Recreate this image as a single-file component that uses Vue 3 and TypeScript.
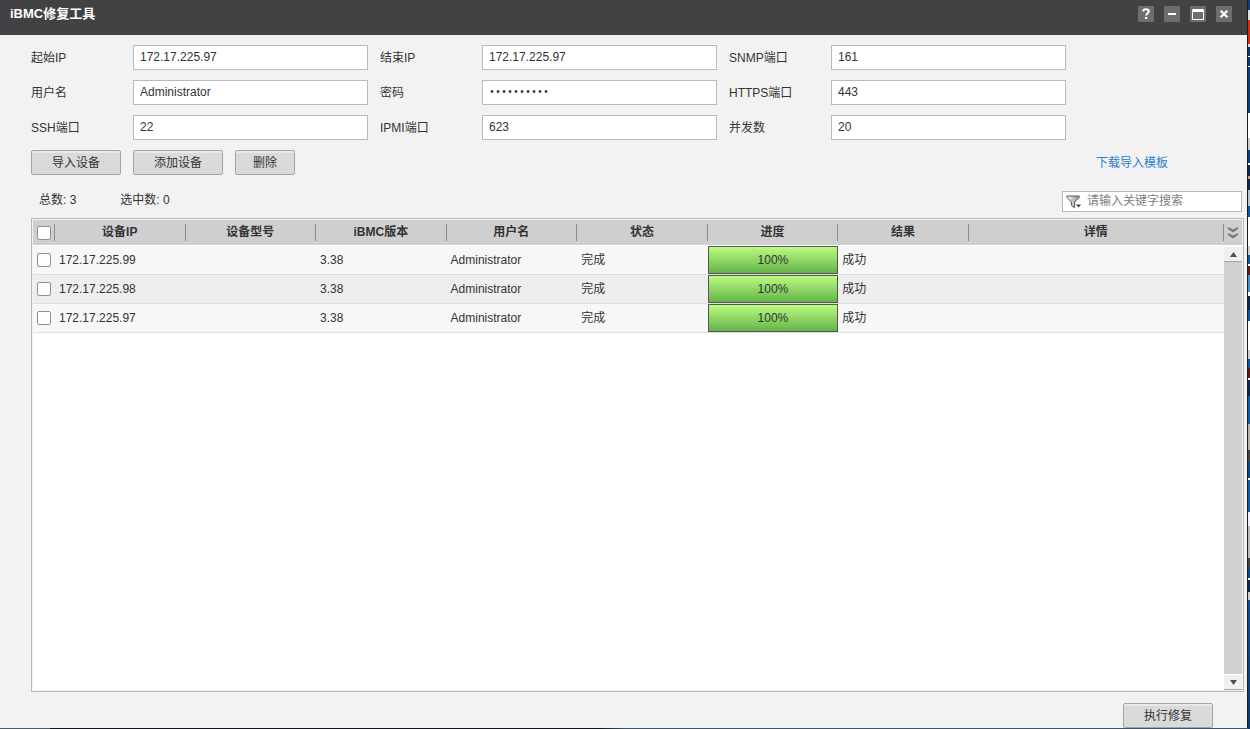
<script setup lang="ts">
import { computed, ref } from 'vue'

interface Field {
  id: string
  label: string
  value: string
  type: 'text' | 'password'
}

interface Device {
  ip: string
  model: string
  version: string
  user: string
  status: string
  progress: number
  result: string
  detail: string
  checked: boolean
}

const fields = ref<Field[]>([
  { id: 'start-ip', label: '起始IP', value: '172.17.225.97', type: 'text' },
  { id: 'end-ip', label: '结束IP', value: '172.17.225.97', type: 'text' },
  { id: 'snmp-port', label: 'SNMP端口', value: '161', type: 'text' },
  { id: 'user-name', label: '用户名', value: 'Administrator', type: 'text' },
  { id: 'password', label: '密码', value: '0000000000', type: 'password' },
  { id: 'https-port', label: 'HTTPS端口', value: '443', type: 'text' },
  { id: 'ssh-port', label: 'SSH端口', value: '22', type: 'text' },
  { id: 'ipmi-port', label: 'IPMI端口', value: '623', type: 'text' },
  { id: 'concurrency', label: '并发数', value: '20', type: 'text' },
])

const headers: string[] = ['设备IP', '设备型号', 'iBMC版本', '用户名', '状态', '进度', '结果']

const makeDevice = (ip: string): Device => ({
  ip,
  model: '',
  version: '3.38',
  user: 'Administrator',
  status: '完成',
  progress: 100,
  result: '成功',
  detail: '',
  checked: false,
})

const devices = ref<Device[]>(['172.17.225.99', '172.17.225.98', '172.17.225.97'].map(makeDevice))
const keyword = ref('')

const selected = computed(() => devices.value.filter((d) => d.checked).length)
const visible = computed(() => devices.value.filter((d) => d.ip.includes(keyword.value)))
const allChecked = computed({
  get: () => devices.value.length > 0 && selected.value === devices.value.length,
  set: (on: boolean) => devices.value.forEach((d) => (d.checked = on)),
})

function removeSelected(): void {
  devices.value = devices.value.filter((d) => !d.checked)
}
</script>

<template>
  <div class="desktop">
    <div class="window">
      <header class="titlebar">
        <h1>iBMC修复工具</h1>
        <div class="controls">
          <button type="button" aria-label="帮助">
            <svg viewBox="0 0 16 16"><path d="M5.2 5.6C5.2 3.9 6.4 3.2 8 3.2s2.8.9 2.8 2.3c0 1.8-2.6 1.9-2.6 4" fill="none" stroke="#fff" stroke-width="2" /><path d="M7 11h2.3v2H7z" fill="#fff" /></svg>
          </button>
          <button type="button" aria-label="最小化">
            <svg viewBox="0 0 16 16"><path d="M4 7h8v2H4z" fill="#fff" /></svg>
          </button>
          <button type="button" aria-label="最大化">
            <svg viewBox="0 0 16 16"><path d="M3 3h10l1 1v10H2V4zM3 6v7h10V6z" fill="#fff" fill-rule="evenodd" /></svg>
          </button>
          <button type="button" aria-label="关闭">
            <svg viewBox="0 0 16 16"><path d="M4.6 4.8l6.8 6.4M11.4 4.8l-6.8 6.4" stroke="#fff" stroke-width="2.2" /></svg>
          </button>
        </div>
      </header>

      <main class="content">
        <form class="fields" @submit.prevent>
          <template v-for="f in fields" :key="f.id">
            <label :for="f.id">{{ f.label }}</label>
            <input :id="f.id" v-model="f.value" :type="f.type" autocomplete="off" />
          </template>
        </form>

        <div class="actions">
          <button type="button" class="btn">导入设备</button>
          <button type="button" class="btn">添加设备</button>
          <button type="button" class="btn short" @click="removeSelected">删除</button>
          <a href="#template">下载导入模板</a>
        </div>

        <div class="summary">
          <span>总数: {{ devices.length }}</span>
          <span>选中数: {{ selected }}</span>
          <label class="search">
            <svg viewBox="0 0 16 14">
              <defs>
                <linearGradient id="funnel" x1="0" x2="1"><stop offset="0" stop-color="#fff" /><stop offset="1" stop-color="#888" /></linearGradient>
              </defs>
              <path d="M.8 1h12.4v1.4L8.6 7v5.8L5.4 10.4V7L.8 2.4z" fill="url(#funnel)" stroke="#555" />
              <path d="M9.8 9.5h5.4l-2.7 3z" fill="#444" />
            </svg>
            <input v-model="keyword" type="text" placeholder="请输入关键字搜索" aria-label="搜索" />
          </label>
        </div>

        <section class="grid">
          <div class="rows">
            <table>
              <colgroup>
                <col class="c-check" />
                <col v-for="h in headers" :key="h" class="c-data" />
                <col />
              </colgroup>
              <thead>
                <tr>
                  <th class="check"><div><input v-model="allChecked" type="checkbox" aria-label="全选" /></div></th>
                  <th v-for="h in headers" :key="h"><div>{{ h }}</div></th>
                  <th><div>详情</div></th>
                </tr>
              </thead>
              <tbody>
                <tr v-for="d in visible" :key="d.ip">
                  <td class="check"><input v-model="d.checked" type="checkbox" :aria-label="d.ip" /></td>
                  <td>{{ d.ip }}</td>
                  <td>{{ d.model }}</td>
                  <td>{{ d.version }}</td>
                  <td>{{ d.user }}</td>
                  <td>{{ d.status }}</td>
                  <td class="bar-cell">
                    <div class="bar" role="progressbar" :aria-valuenow="d.progress">
                      <div class="fill" :style="{ width: d.progress + '%' }">{{ d.progress }}%</div>
                    </div>
                  </td>
                  <td>{{ d.result }}</td>
                  <td>{{ d.detail }}</td>
                </tr>
              </tbody>
            </table>
          </div>
          <div class="side">
            <button type="button" class="more" aria-label="选择列">
              <svg viewBox="0 0 10 12"><path d="M0 0l5 2.5L10 0v2L5 5.5 0 2zM0 6l5 2.5L10 6v2l-5 3.5L0 8z" fill="#777" /></svg>
            </button>
            <button type="button" class="arrow" aria-label="向上滚动">
              <svg viewBox="0 0 7 5"><path d="M3.5 0L7 5H0z" fill="#505050" /></svg>
            </button>
            <div class="track"></div>
            <button type="button" class="arrow" aria-label="向下滚动">
              <svg viewBox="0 0 7 5"><path d="M0 0h7L3.500 5z" fill="#505050" /></svg>
            </button>
          </div>
        </section>

        <footer>
          <button type="button" class="btn">执行修复</button>
        </footer>
      </main>
    </div>
    <div class="strip"></div>
  </div>
</template>

<style>
body {
  margin: 0;
}
</style>

<style scoped>
* {
  box-sizing: border-box;
}

.desktop {
  display: flex;
  height: 100vh;
  padding-bottom: 1px;
  background: linear-gradient(90deg, #4a5a68 4%, #12161c 4%, #12161c 48%, #3f5468 50%);
  color: #333;
  font-family: "Liberation Sans", Arial, "Noto Sans CJK SC", sans-serif;
  font-size: 12px;
  line-height: 16px;
}

button,
input {
  margin: 0;
  color: inherit;
  font: inherit;
}

.strip {
  width: 2px;
  margin-bottom: -1px;
  background: linear-gradient(
    #123a7a 0 10px, #ddd 10px 20px, #e02a10 20px 44px, #ddd 44px 47px,
    #0a3570 47px 56px, #fff 56px 57px, #0a3a78 57px 66px, #fff 66px 67px, #0a3f80 67px 113px,
    #fff 113px 138px, #ccc 138px 150px, #0a3f80 150px 163px, #fff 163px 165px, #0a2850 165px 176px,
    #d0a070 176px 179px, #0a2850 179px 190px, #b8c4cc 190px 206px, #0b57a0 206px 217px,
    #fff 217px 246px, #ccc 246px 255px, #0b57a0 255px 264px, #fff 264px 266px, #601818 266px 275px,
    #4a90c8 275px 292px, #fff 292px 296px, #0a2850 296px 310px, #0b57a0 310px 321px,
    #fff 321px 350px, #ccc 350px 359px, #0b57a0 359px 368px, #601818 368px 378px, #fff 378px 380px,
    #0a2850 380px 396px, #0b5fa8 396px 424px, #b5b1aa 424px 450px, #444 450px 462px,
    #0a4a8c 462px 478px, #fff 478px 480px, #0b5fa8 480px 512px, #eef 512px 526px, #bbb 526px 558px,
    #444 558px 568px, #0a4a8c 568px 578px, #fff 578px 580px, #0a2850 580px 592px, #ccc 592px 600px,
    #0d4f98 600px, #0a3a70
  );
}

.window {
  display: flex;
  flex: 1;
  flex-direction: column;
  min-width: 0;
  border-right: 1px solid #1c1c1e;
  background: #f2f2f2;
}

.titlebar {
  display: flex;
  justify-content: space-between;
  height: 35px;
  padding: 6px 15px 0 10px;
  background: #424244;
}

h1 {
  margin: 0;
  color: #fff;
  font-size: 13px;
  font-weight: bold;
  line-height: 16px;
}

.controls {
  display: flex;
  gap: 10px;
}

.controls button {
  width: 16px;
  height: 16px;
  padding: 0;
  border: 0;
  border-radius: 1px;
  background: #6e6e70;
}

svg {
  display: block;
}

.content {
  display: flex;
  flex: 1;
  flex-direction: column;
  min-height: 0;
  padding: 10px 3px 0 31px;
}

.fields {
  display: grid;
  grid-template-columns: repeat(3, 90px 1fr);
  gap: 10px 12px;
  padding-right: 178px;
}

.fields label {
  height: 25px;
  line-height: 26px;
  white-space: nowrap;
}

.fields input {
  width: 100%;
  min-width: 0;
  height: 25px;
  padding: 0 6px 1px;
  border: 1px solid #b9babe;
  border-radius: 0;
  background: #fff;
  outline: none;
}

.fields input[type="password"] {
  font-family: "Liberation Mono", monospace;
  font-size: 10px;
}

.actions {
  display: flex;
  gap: 12px;
  height: 25px;
  margin-top: 10px;
  padding-right: 76px;
}

.actions a {
  margin-left: auto;
  color: #2a82cf;
  line-height: 26px;
  text-decoration: none;
}

.btn {
  width: 90px;
  height: 25px;
  padding: 1px 0 0;
  border: 1px solid #a3a4a8;
  border-radius: 2px;
  background: linear-gradient(#e8e8e8 2px, #dadada 2px);
  line-height: 16px;
}

.btn.short {
  width: 60px;
}

.summary {
  display: flex;
  gap: 44px;
  margin-top: 16px;
  padding: 0 2px 0 8px;
  line-height: 19px;
}

.search {
  display: flex;
  gap: 5px;
  align-items: center;
  width: 180px;
  height: 21px;
  margin-left: auto;
  padding: 0 3px;
  border: 1px solid #b9babe;
  background: #fff;
}

.search svg {
  width: 16px;
  height: 14px;
}

.search input {
  flex: 1;
  min-width: 0;
  padding: 0;
  border: 0;
  background: none;
  outline: none;
}

.search input::placeholder {
  color: #808080;
  opacity: 1;
}

.grid {
  display: flex;
  flex: 1;
  min-height: 0;
  margin-top: 6px;
  padding: 1px;
  border: 1px solid #b9b9b9;
}

.rows {
  flex: 1;
  min-width: 0;
  overflow: hidden;
  background: #fff;
}

table {
  width: 100%;
  border-collapse: separate;
  border-spacing: 0;
  table-layout: fixed;
}

.c-check {
  width: 22px;
}

.c-data {
  width: 10.96%;
}

th {
  height: 26px;
  padding: 0;
  border-bottom: 1px solid #fff;
  background: #cfcfcf;
  font-weight: bold;
}

th div {
  height: 17px;
  border-right: 1px solid #8c8c8c;
  line-height: 16px;
}

th.check div {
  display: flex;
  align-items: center;
}

td {
  height: 29px;
  padding: 0 4px;
  border-bottom: 1px solid #dedede;
  white-space: nowrap;
}

td.check,
th.check {
  padding-left: 4px;
  padding-right: 0;
}

tbody tr {
  background: #f7f7f7;
}

tbody tr:nth-child(even) {
  background: #eee;
}

input[type="checkbox"] {
  display: block;
  flex: none;
  width: 14px;
  height: 14px;
  border: 1px solid #8f8f8f;
  border-radius: 2px;
  appearance: none;
  background: #fff;
}

input[type="checkbox"]:checked {
  background: #4a9a3a;
}

td.bar-cell {
  padding: 0;
}

.bar {
  height: 28px;
  border: 1px solid #555;
  background: #fff;
}

.fill {
  height: 26px;
  background: linear-gradient(#bbfb80, #64b44a);
  line-height: 26px;
  text-align: center;
}

.side {
  display: flex;
  flex-direction: column;
  width: 18px;
  background: #fff;
}

.side button {
  display: flex;
  align-items: center;
  justify-content: center;
  padding: 0;
  border: 0;
}

.side .more {
  height: 25px;
  margin-bottom: 2px;
  background: #cfcfcf;
}

.more svg {
  width: 10px;
  height: 12px;
}

.side .arrow {
  height: 15px;
  border-bottom: 1px solid #a5a5a5;
  background: #f0f0f0;
}

.arrow svg {
  width: 7px;
  height: 5px;
}

.track {
  flex: 1;
  margin-bottom: 1px;
  background: #d0d0d0;
}

footer {
  display: flex;
  justify-content: flex-end;
  margin-top: 11px;
  padding-right: 31px;
}
</style>
